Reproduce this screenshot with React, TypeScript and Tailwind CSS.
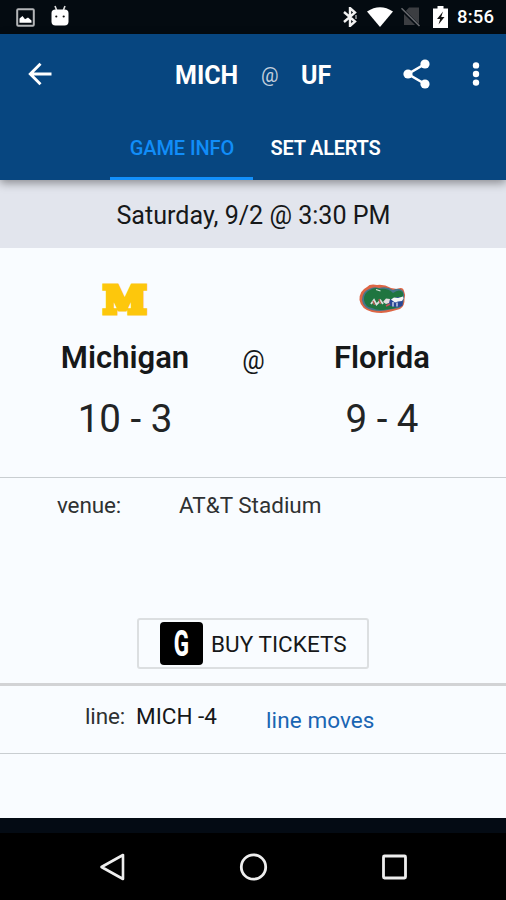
import type { ReactNode } from 'react'

const ROBOTO = "font-['Roboto','Liberation_Sans',sans-serif]"

function StatusBar() {
  return (
    <div className="flex h-[34px] items-center justify-between bg-[#040b11] pr-[11px] pl-4 text-white">
      <div className="flex items-center gap-[16px]">
        <svg className="h-[19px] w-[19px]" viewBox="0 0 19 19">
          <rect x="1.2" y="1.2" width="16.6" height="16.6" rx="1" fill="none" stroke="#b4b6b8" strokeWidth="2" />
          <path d="M3.5 14.8v-4.2l3-2.6 2.5 3.2 3-1.6 3.5 2.8v2.4z" fill="#fff" />
        </svg>
        <svg className="-mt-0.5 h-[22px] w-[18px]" viewBox="0 0 18 22">
          <path d="M4 1l1.6 4M14 1l-1.6 4" stroke="#ddd" strokeWidth="1.6" />
          <path d="M0.5 8q0-3.500 4-3.500h9q4 0 4 3.500v8.500q0 4-4 4h-9q-4 0-4-4z" fill="#fff" />
          <circle cx="5.3" cy="11.5" r="1.1" fill="#111" />
          <circle cx="12.7" cy="11.5" r="1.1" fill="#111" />
        </svg>
      </div>
      <div className="flex items-center">
        <svg className="h-[20px] w-[14px]" viewBox="0 0 14 20">
          <path d="M1 5l11 9.5-5 4.5V1l5 4.5L1 15" fill="none" stroke="#f2f2f2" strokeWidth="2.4" />
          <path d="M13 8v4" stroke="#ccc" strokeWidth="1.2" />
        </svg>
        <svg className="ml-[10px] h-[20px] w-[26px]" viewBox="0 0 26 20">
          <path d="M0 4.5Q13-4 26 4.5L13 20z" fill="#fff" />
        </svg>
        <svg className="ml-[8px] h-[20px] w-[20px]" viewBox="0 0 20 20">
          <path d="M8 .5h10v17.5H3V6z" fill="#3c3e42" />
          <path d="M0 1.5L18.5 20" stroke="#040b11" strokeWidth="3.4" />
          <path d="M.5 1.2L18.5 19" stroke="#6a6c70" strokeWidth="1.5" />
        </svg>
        <svg className="ml-[12px] h-[22px] w-[15px]" viewBox="0 0 15 22">
          <path d="M4.5 0h6v2.5H15V22H0V2.5h4.500z" fill="#fff" />
          <path d="M10 5.5l-6 7.500h3.200L5.500 18.500 11.500 11H8.200z" fill="#111" />
        </svg>
        <span className="ml-[9px] w-[38px] pt-0.5 text-[18.5px] font-medium tracking-[0.2px] whitespace-nowrap">
          8:56
        </span>
      </div>
    </div>
  )
}

function AppBar() {
  return (
    <div className="flex h-[80px] items-center text-white">
      <button type="button" aria-label="Back" className="ml-[27px] w-[148px]">
        <svg className="h-[26px] w-[26px]" viewBox="0 0 26 26">
          <path d="M13.5 2.8L3.3 13l10.2 10.2M3.3 13H24.5" fill="none" stroke="#fff" strokeWidth="2.9" />
        </svg>
      </button>
      <span className="w-[86px] pt-[3px] text-[25px] font-bold whitespace-nowrap">MICH</span>
      <span className="w-[40px] pt-1 text-[19.5px] text-[#c3cfdd]">@</span>
      <span className="w-[102px] pt-[3px] text-[25px] font-bold">UF</span>
      <button type="button" aria-label="Share" className="w-[69px]">
        <svg className="h-[30px] w-[27px]" viewBox="0 0 27 30">
          <path d="M22 5L5 15l17 10" fill="none" stroke="#fff" strokeWidth="2.6" />
          <circle cx="22" cy="5" r="4.6" fill="#fff" />
          <circle cx="5" cy="15" r="4.6" fill="#fff" />
          <circle cx="22" cy="25" r="4.6" fill="#fff" />
        </svg>
      </button>
      <button type="button" aria-label="More options">
        <svg className="h-[24px] w-[8px]" viewBox="0 0 8 24">
          <circle cx="4" cy="3.4" r="3.2" fill="#fff" />
          <circle cx="4" cy="12" r="3.2" fill="#fff" />
          <circle cx="4" cy="20.6" r="3.2" fill="#fff" />
        </svg>
      </button>
    </div>
  )
}

function Tabs() {
  return (
    <nav className="flex h-[66px] pl-[110px] text-[20px] whitespace-nowrap">
      <button
        type="button"
        className="w-[143px] border-b-[3px] border-[#1390fb] pt-[4px] pl-px font-medium tracking-[-0.1px] text-[#118df8]"
      >
        GAME INFO
      </button>
      <button
        type="button"
        className="w-[144px] border-b-[3px] border-transparent pt-[4px] pl-px font-semibold tracking-[-0.25px] text-white"
      >
        SET ALERTS
      </button>
    </nav>
  )
}

function MichiganLogo() {
  return (
    <svg className="h-[36px] w-[50px] overflow-visible" viewBox="0 0 50 36">
      <text
        x="25"
        y="31.5"
        textAnchor="middle"
        textLength="43"
        lengthAdjust="spacingAndGlyphs"
        className="font-['DejaVu_Serif',serif] text-[37px] font-bold"
        fill="#fdc70c"
        stroke="#fdc70c"
        strokeWidth="5"
      >
        M
      </text>
    </svg>
  )
}

function FloridaLogo() {
  return (
    <svg className="h-[36px] w-[50px]" viewBox="0 0 50 36">
      <path
        d="M2.500 19Q2 10 10 6Q13 2.500 20 4Q27 3 34 7L40 8Q46 5 47 10Q49 14 47.500 18Q48 25 43 28L34 30.500Q26 33 15 31Q4 28 2.500 19z"
        fill="#dd6545"
      />
      <path
        d="M5 19Q5 11 12 8Q17 5 22 7Q30 5 36 9Q42 6 46 10Q48 14 46.500 20Q46 25 42 27L33 28.500Q24 31 15 29Q6 27 5 19z"
        fill="#46758a"
      />
      <path
        d="M7 19Q6.500 12 13 9Q18 5.500 23 8Q31 7 36 12Q42 7.500 45.500 11Q47 14 45 16.500L37 17 31 22Q35 27 42 26Q35 28 29 28.500Q21 30 15 27Q8 26 7 19z"
        fill="#1f7540"
      />
      <path d="M30 21Q36 15.500 46 16L45.500 25Q40 27 33 25z" fill="#2a4796" />
      <path d="M34 18.500l3-2 4 .5 5-1.500.5 2-1.500 2.500-4 .5-3 1z" fill="#f7f6f6" />
      <path d="M26 21l3-3.500 4 .5-1 4-3 1z" fill="#e5dde0" />
      <path d="M36 21v4.500M40 21.500v4" stroke="#dfe3f0" strokeWidth="1.3" />
      <path d="M29 25l4-2" stroke="#c94f58" strokeWidth="1.6" />
      <path d="M14 23l3-4 2.500 4.500 4-4 2.500 3.500" fill="none" stroke="#d7dfdb" strokeWidth="1.8" />
      <path d="M16 20l1.500 4M22 18l1.500 5" stroke="#c0564f" strokeWidth="1.3" />
      <path d="M19 8.500l4.500 1.500" stroke="#dce7df" strokeWidth="1.3" />
    </svg>
  )
}

interface TeamProps {
  logo: ReactNode
  name: string
  record: string
}

function Team({ logo, name, record }: TeamProps) {
  return (
    <div className="flex w-[160px] flex-col items-center whitespace-nowrap">
      {logo}
      <span className="mt-[21px] text-[31px] leading-[40px] font-semibold">{name}</span>
      <span className="mt-[16px] text-[38.5px] leading-[50px] text-[#222425]">{record}</span>
    </div>
  )
}

function TicketsButton() {
  return (
    <button
      type="button"
      className="flex h-[51px] w-[232px] items-center rounded-[3px] border-2 border-[#dcdfe1] pl-[21px] text-[22.5px]"
    >
      <span className="flex h-[43px] w-[43px] items-center justify-center rounded-[4px] bg-black text-white">
        <span className="scale-x-[0.62] text-[36px] leading-none font-extrabold">G</span>
      </span>
      <span className="ml-[8px] pt-[3px] tracking-[0.05px] whitespace-nowrap">BUY TICKETS</span>
    </button>
  )
}

function NavBar() {
  return (
    <div className="flex h-[82px] justify-center gap-[112px] border-t-[15px] border-[#040b14] bg-black">
      <svg className="mt-[19px] h-[30px] w-[28px]" viewBox="0 0 28 30">
        <path d="M25 3v24L3.5 15z" fill="none" stroke="#eee" strokeWidth="2.6" strokeLinejoin="round" />
      </svg>
      <svg className="mt-[19px] h-[30px] w-[30px]" viewBox="0 0 30 30">
        <circle cx="15.5" cy="15" r="12.2" fill="none" stroke="#eee" strokeWidth="2.8" />
      </svg>
      <svg className="mt-[19px] h-[30px] w-[28px]" viewBox="0 0 28 30">
        <rect x="3.5" y="4" width="22" height="22" rx="1" fill="none" stroke="#eee" strokeWidth="2.8" />
      </svg>
    </div>
  )
}

export default function App() {
  return (
    <div className={`flex h-[900px] w-[506px] flex-col overflow-hidden bg-[#f9fcff] text-[#161819] ${ROBOTO}`}>
      <StatusBar />
      <header className="relative h-[146px] shrink-0 bg-[#074680] shadow-[0_3px_9px_rgba(0,0,0,0.4)]">
        <AppBar />
        <Tabs />
      </header>
      <div className="flex h-[68px] shrink-0 items-center justify-center bg-[#e2e5ed] pt-[3px] pl-px text-[25.1px] whitespace-nowrap">
        Saturday, 9/2 @ 3:30 PM
      </div>

      <section className="flex h-[230px] shrink-0 border-b border-[#c9ced1] pt-[33px] pl-[45px]">
        <Team logo={<MichiganLogo />} name="Michigan" record="10 - 3" />
        <span className="w-[97px] pt-[61px] text-center text-[25px]">@</span>
        <Team logo={<FloridaLogo />} name="Florida" record="9 - 4" />
      </section>

      <section className="flex h-[208px] shrink-0 flex-col border-b-[3px] border-[#d2d3d5]">
        <div className="flex h-[56px] items-center pl-[57px] text-[22.5px] text-[#2f3132] whitespace-nowrap">
          <span className="w-[122px] tracking-[-0.15px]">venue:</span>
          <span>AT&amp;T Stadium</span>
        </div>
        <div className="mt-[84px] flex justify-center">
          <TicketsButton />
        </div>
      </section>

      <section className="flex h-[68px] shrink-0 border-b border-[#c9ced1] pl-[85px] text-[22.5px] whitespace-nowrap">
        <span className="w-[51px] pt-[14px] tracking-[-0.15px] text-[#2f3132]">line:</span>
        <span className="w-[130px] pt-[14px]">MICH -4</span>
        <a className="pt-[18px] tracking-[0.1px] text-[#1965b3]">line moves</a>
      </section>

      <div className="mt-auto">
        <NavBar />
      </div>
    </div>
  )
}
